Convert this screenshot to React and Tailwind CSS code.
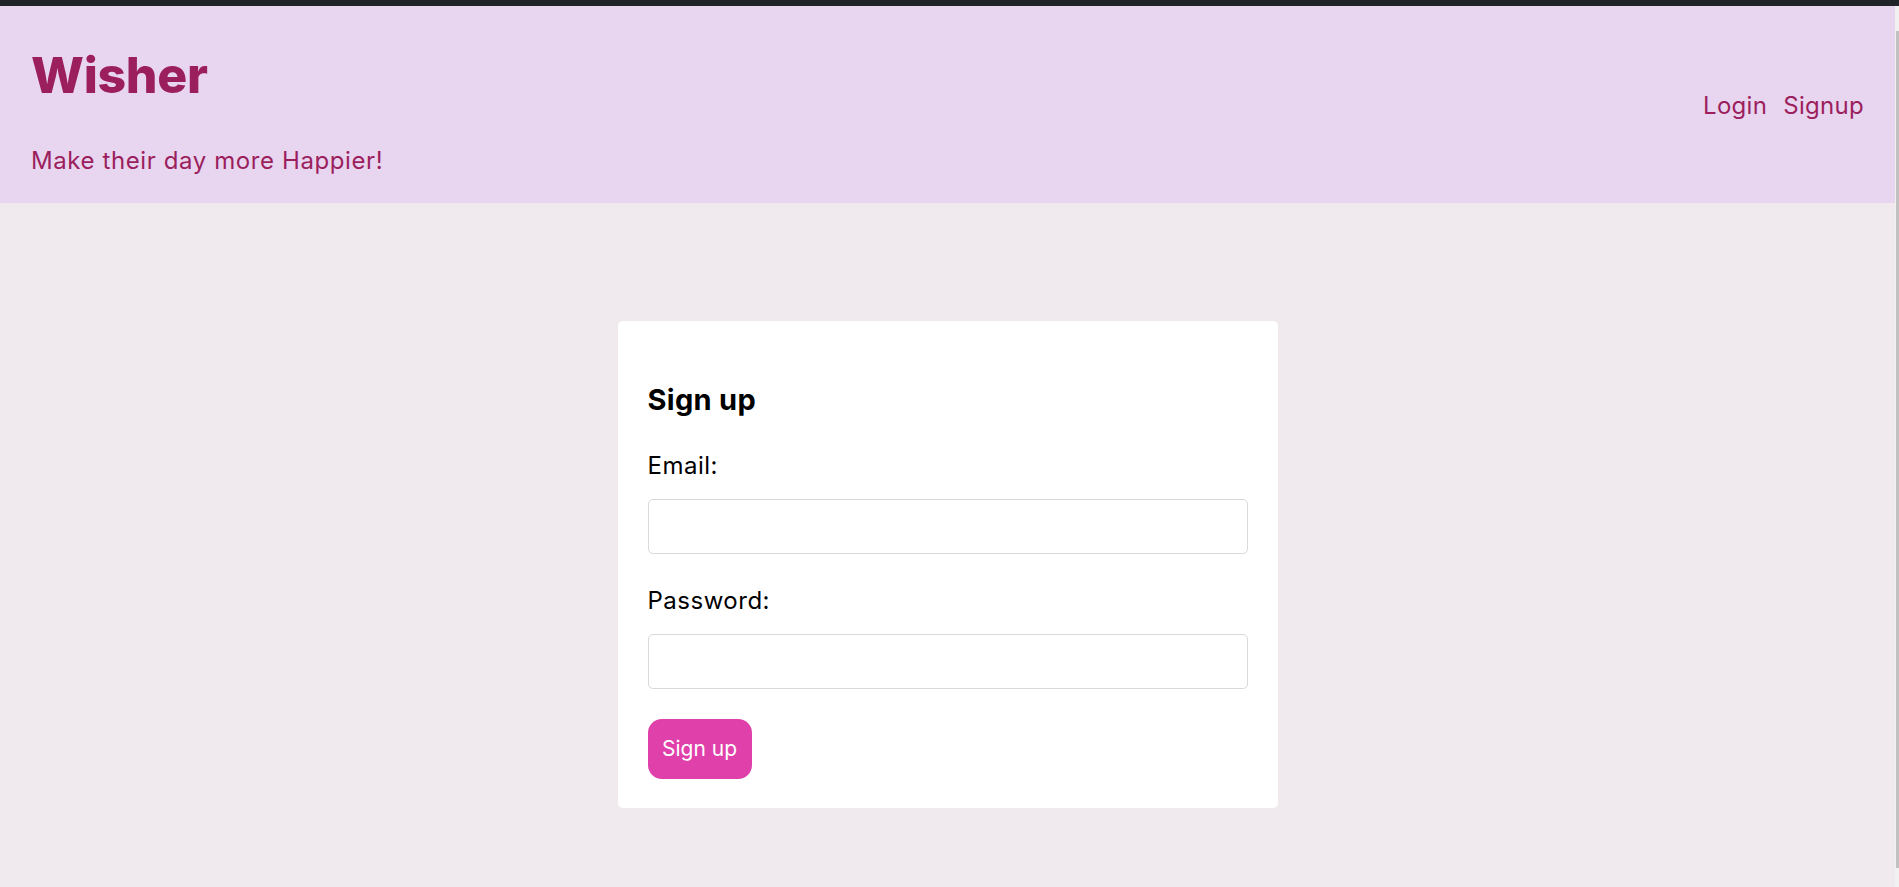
import React, { useState } from "react";

const font = { fontFamily: "Inter, 'Noto Sans', sans-serif" };

const Field = ({ label, type, value, onChange, className }) => (
  <div className={className}>
    <label className="block text-[24px] leading-[36px] tracking-[0.5px] text-black">{label}</label>
    <input
      type={type}
      value={value}
      onChange={(e) => onChange(e.target.value)}
      className="mt-[15px] block h-[55px] w-full rounded-[5px] border border-[#d9d9d9] bg-white px-3 text-[20px] outline-none"
    />
  </div>
);

export default function App() {
  const [email, setEmail] = useState("");
  const [password, setPassword] = useState("");

  return (
    <div className="flex h-[887px] flex-col overflow-hidden bg-[#f0eaee]" style={font}>
      <div className="h-[6px] shrink-0 bg-[#202327]" />
      <div className="flex flex-1">
        <div className="flex flex-1 flex-col">
          {/* header */}
          <header className="flex h-[197px] items-center justify-between bg-[#e8d5f0] px-[31px] text-[#9c1f5d]">
            <div className="self-start pt-[39px]">
              <h1 className="text-[50px] font-extrabold leading-[60px] tracking-[-0.3px]">Wisher</h1>
              <p className="mt-[38px] text-[24px] leading-[36px] tracking-[0.6px]">Make their day more Happier!</p>
            </div>
            <nav className="mt-[2px] flex gap-[16px] text-[24px] leading-[36px] tracking-[0.3px]">
              <a href="#">Login</a>
              <a href="#">Signup</a>
            </nav>
          </header>

          {/* form */}
          <main className="flex flex-1 justify-center pt-[118px]">
            <form
              onSubmit={(e) => e.preventDefault()}
              className="h-fit w-[660px] rounded-[5px] bg-white px-[30px] pt-[59px] pb-[29px]"
            >
              <h2 className="text-[29px] font-bold leading-[40px] tracking-[0.3px] text-black">Sign up</h2>
              <Field className="mt-[28px]" label="Email:" type="email" value={email} onChange={setEmail} />
              <Field className="mt-[29px]" label="Password:" type="password" value={password} onChange={setPassword} />
              <button
                type="submit"
                className="mt-[30px] flex h-[60px] w-[104px] items-center justify-center rounded-[14px] bg-[#e040aa] text-[21px] text-white"
              >
                Sign up
              </button>
            </form>
          </main>
        </div>

        {/* scrollbar strip */}
        <div className="flex w-[4px] shrink-0 flex-col bg-[#f1f1f1] pt-[25px] pb-[19px] pl-[1px]">
          <div className="flex-1 bg-[#c1c1c1]" />
        </div>
      </div>
    </div>
  );
}
